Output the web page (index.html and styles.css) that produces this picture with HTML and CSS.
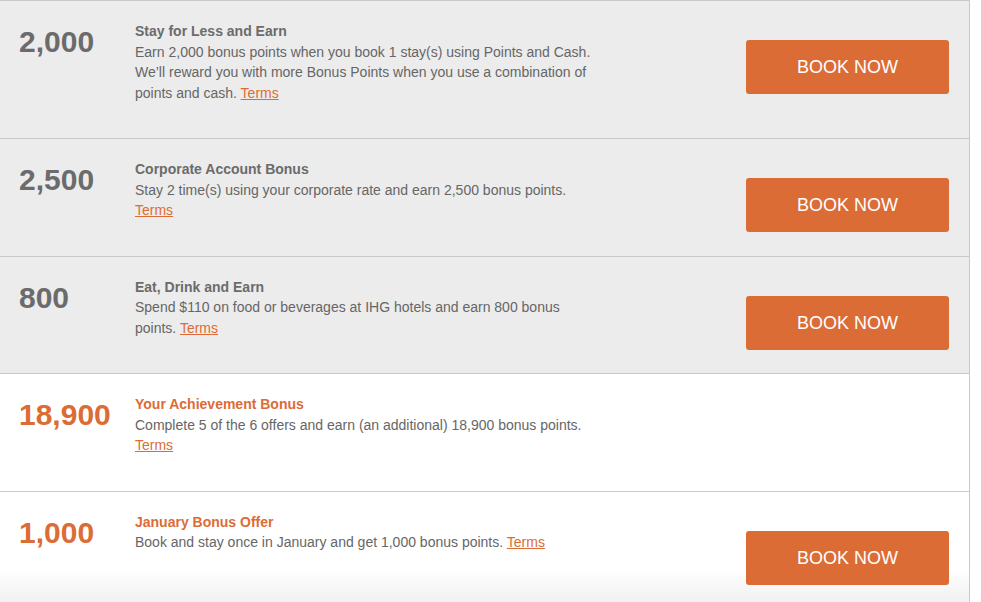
FILE: index.html
```html
<!DOCTYPE html>
<html lang="en">
<head>
  <meta charset="UTF-8">
  <title>Offers</title>
  <link rel="stylesheet" href="styles.css">
</head>
<body>
  <div class="offers">
    <div class="offer">
      <div class="points">2,000</div>
      <div class="info">
        <h3>Stay for Less and Earn</h3>
        <p>Earn 2,000 bonus points when you book 1 stay(s) using Points and Cash. We’ll reward you with more Bonus Points when you use a combination of points and cash. <a href="#">Terms</a></p>
      </div>
      <div class="action"><a class="book" href="#">BOOK NOW</a></div>
    </div>

    <div class="offer">
      <div class="points">2,500</div>
      <div class="info">
        <h3>Corporate Account Bonus</h3>
        <p>Stay 2 time(s) using your corporate rate and earn 2,500 bonus points. <a href="#">Terms</a></p>
      </div>
      <div class="action"><a class="book" href="#">BOOK NOW</a></div>
    </div>

    <div class="offer">
      <div class="points">800</div>
      <div class="info">
        <h3>Eat, Drink and Earn</h3>
        <p>Spend $110 on food or beverages at IHG hotels and earn 800 bonus points. <a href="#">Terms</a></p>
      </div>
      <div class="action"><a class="book" href="#">BOOK NOW</a></div>
    </div>

    <div class="offer active">
      <div class="points">18,900</div>
      <div class="info">
        <h3>Your Achievement Bonus</h3>
        <p>Complete 5 of the 6 offers and earn (an additional) 18,900 bonus points. <a href="#">Terms</a></p>
      </div>
      <div class="action"></div>
    </div>

    <div class="offer active last">
      <div class="points">1,000</div>
      <div class="info">
        <h3>January Bonus Offer</h3>
        <p>Book and stay once in January and get 1,000 bonus points. <a href="#">Terms</a></p>
      </div>
      <div class="action"><a class="book" href="#">BOOK NOW</a></div>
    </div>
  </div>
</body>
</html>
```

FILE: styles.css
```css
body {
  margin: 0;
  font-family: "Liberation Sans", Arial, sans-serif;
  background-color: #fff;
  color: #666;
}

.offers {
  width: 970px;
  border-top: 1px solid #c9c9c9;
  border-right: 1px solid #c9c9c9;
  box-sizing: border-box;
}

.offer {
  display: flex;
  align-items: flex-start;
  padding: 20px 20px 23px 19px;
  background-color: #ececec;
  border-bottom: 1px solid #c9c9c9;
}

.offer.active {
  background-color: #fff;
}

.offer.last {
  background: linear-gradient(#fff 66%, #f0f0f0 96%);
}

.points {
  width: 116px;
  flex-shrink: 0;
  margin-top: 4px;
  font-size: 30px;
  font-weight: bold;
  line-height: 34px;
  color: #6b6b6b;
}

.info {
  width: 464px;
  flex-shrink: 0;
  padding-bottom: 12px;
  font-size: 14px;
  line-height: 20.5px;
}

.info h3 {
  margin: 0;
  font-size: 14px;
  line-height: 20.5px;
  color: #6b6b6b;
}

.active .points,
.active .info h3 {
  color: #dc6c36;
}

.info p {
  margin: 0;
}

.info a {
  color: #dc6c36;
  text-decoration: underline;
}

.action {
  flex: 1;
  display: flex;
  justify-content: flex-end;
  padding-top: 19px;
}

.book {
  display: block;
  width: 203px;
  height: 54px;
  line-height: 54px;
  border-radius: 3px;
  background-color: #dc6c36;
  color: #fff;
  font-size: 18px;
  text-align: center;
  text-decoration: none;
}
```
